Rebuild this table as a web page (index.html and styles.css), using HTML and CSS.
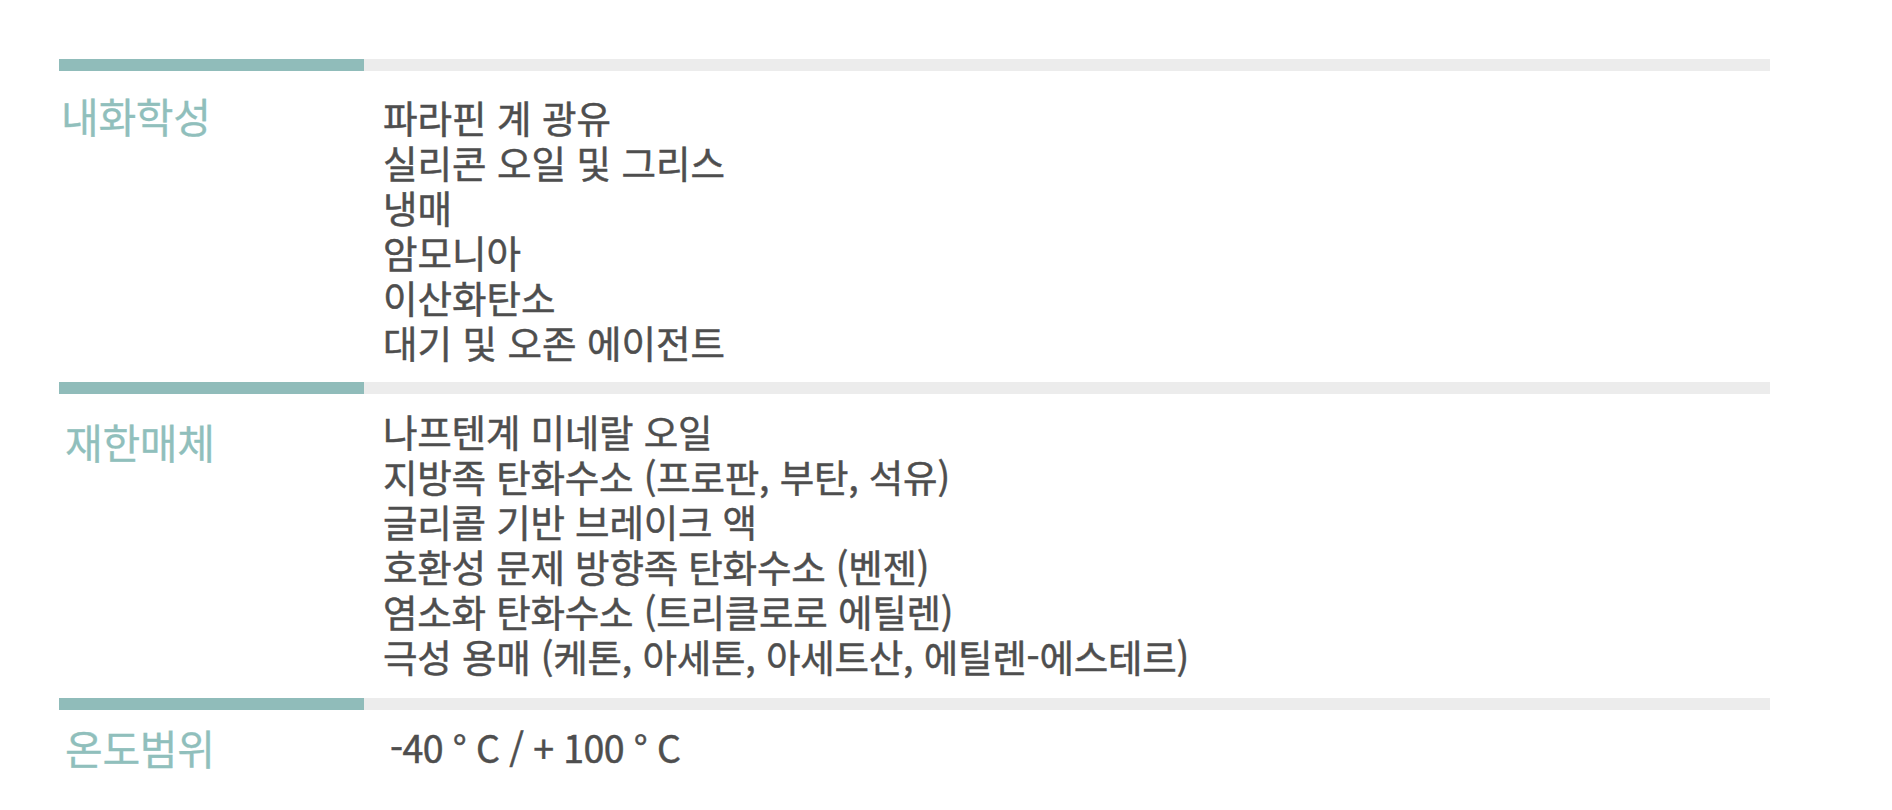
FILE: index.html
```html
<!DOCTYPE html>
<html lang="ko">
<head>
<meta charset="utf-8">
<title>Spec</title>
<link rel="stylesheet" href="styles.css">
</head>
<body>
<div class="spec">
  <section class="group group-chem">
    <div class="bar"><span class="bar-accent"></span></div>
    <div class="group-body">
      <h3 class="label">내화학성</h3>
      <ul class="items">
        <li>파라핀 계 광유</li>
        <li>실리콘 오일 및 그리스</li>
        <li>냉매</li>
        <li>암모니아</li>
        <li>이산화탄소</li>
        <li>대기 및 오존 에이전트</li>
      </ul>
    </div>
  </section>
  <section class="group group-media">
    <div class="bar"><span class="bar-accent"></span></div>
    <div class="group-body">
      <h3 class="label">재한매체</h3>
      <ul class="items">
        <li>나프텐계 미네랄 오일</li>
        <li>지방족 탄화수소 (프로판, 부탄, 석유)</li>
        <li>글리콜 기반 브레이크 액</li>
        <li>호환성 문제 방향족 탄화수소 (벤젠)</li>
        <li>염소화 탄화수소 (트리클로로 에틸렌)</li>
        <li>극성 용매 (케톤, 아세톤, 아세트산, 에틸렌-에스테르)</li>
      </ul>
    </div>
  </section>
  <section class="group group-temp">
    <div class="bar"><span class="bar-accent"></span></div>
    <div class="group-body">
      <h3 class="label">온도범위</h3>
      <ul class="items">
        <li class="temp">-40 ° C / + 100 ° C</li>
      </ul>
    </div>
  </section>
</div>
</body>
</html>
```

FILE: styles.css
```css
html, body {
  margin: 0;
  padding: 0;
  background: #ffffff;
}

body {
  font-family: "Noto Sans CJK KR", "Noto Sans", sans-serif;
  color: #4e4e4e;
}

.spec {
  padding: 59px 0 0 59px;
  width: 1711px;
}

.bar {
  height: 12px;
  background: #ececec;
  display: flex;
}

.bar-accent {
  width: 305px;
  height: 100%;
  background: #90bcba;
}

.group-body {
  display: flex;
  align-items: flex-start;
}

.label {
  width: 324px;
  flex: none;
  margin: 0;
  padding-left: 2px;
  box-sizing: border-box;
  font-size: 41px;
  font-weight: 400;
  line-height: 52px;
  color: #90bfbc;
  letter-spacing: -0.3px;
  -webkit-text-stroke: 0.3px #90bfbc;
}

.items {
  list-style: none;
  margin: 0;
  padding: 0;
  font-size: 37.5px;
  font-weight: 400;
  line-height: 45px;
  -webkit-text-stroke: 0.5px #4e4e4e;
}

.group-chem .group-body { padding: 23px 0 18px; }
.group-chem .label { margin-top: -5px; }

.group-media .group-body { padding: 14px 0 20px; }
.group-media .label { margin-top: 7px; padding-left: 6px; }
.group-media .items { letter-spacing: -0.2px; }

.group-temp .group-body { padding: 14px 0 0; }
.group-temp .label { margin-top: -3px; padding-left: 6px; }
.group-temp .temp { padding-left: 7px; letter-spacing: -0.6px; }
```
